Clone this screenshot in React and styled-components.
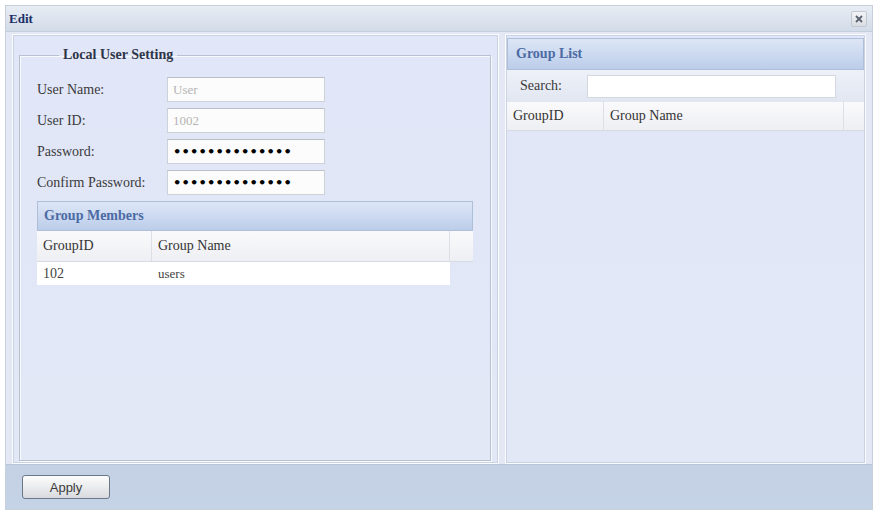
import React from "react"
import styled, { createGlobalStyle } from "styled-components"

const GlobalStyle = createGlobalStyle`
  body {
    margin: 0;
    background: #ffffff;
    font-family: "Liberation Serif", "Times New Roman", serif;
    color: #3a3a3a;
  }
`

const Window = styled.div`
  box-sizing: border-box;
  margin: 5px 0 0 5px;
  width: 868px;
  height: 505px;
  border: 1px solid #c6cfdb;
  background: #c4d2e6;
  display: flex;
  flex-direction: column;
`

const TitleBar = styled.div`
  height: 25px;
  display: flex;
  align-items: center;
  justify-content: space-between;
  padding: 0 5px 0 3px;
  background: linear-gradient(#e8edf4, #d2dbe8);
  border-bottom: 1px solid #c4cedc;
`

const Title = styled.span`
  font-weight: bold;
  font-size: 13px;
  color: #1b2f67;
`

const CloseButton = styled.div`
  width: 14px;
  height: 14px;
  display: flex;
  align-items: center;
  justify-content: center;
  background: linear-gradient(#f3f4f6, #d9dde3);
  border: 1px solid #c3c9d2;
  border-radius: 2px;
`

const Body = styled.div`
  height: 430px;
  display: flex;
  gap: 6px;
  padding: 2px 4px 0 6px;
  background: #e3e8f4;
  border-bottom: 1px solid #b9c6d8;
`

const Panel = styled.div`
  box-sizing: border-box;
  width: ${p => p.width}px;
  height: 100%;
  border: 1px solid #fafcff;
  box-shadow: inset 0 0 0 1px #cad3e1;
  background: linear-gradient(#e1e6f8, #e2e8f6);
  display: flex;
  flex-direction: column;
  padding: ${p => p.pad || "0"};
`

const Fieldset = styled.fieldset`
  flex: 1;
  margin: 0;
  padding: 14px 16px 0 17px;
  border: 1px solid #b8c1ce;
  box-shadow: 1px 1px 0 #f7f9fd, inset 1px 1px 0 #f7f9fd;
  min-width: 0;
`

const Legend = styled.legend`
  margin-left: 22px;
  padding: 0 4px;
  font-weight: bold;
  font-size: 14px;
  color: #2e3547;
`

const FormRow = styled.div`
  display: grid;
  grid-template-columns: 130px 158px;
  align-items: center;
  height: 25px;
  margin-bottom: 6px;
  font-size: 14px;
`

const TextBox = styled.div`
  box-sizing: border-box;
  height: 25px;
  display: flex;
  align-items: center;
  padding: 0 5px;
  background: #fcfcfc;
  border: 1px solid #cdd1d8;
  border-top-color: #b9bec7;
  font-size: 13px;
  color: ${p => (p.dots ? "#000" : "#b5b5b5")};
  letter-spacing: ${p => (p.dots ? "0.2px" : "0")};
  font-weight: ${p => (p.dots ? "bold" : "normal")};
  font-family: ${p => (p.dots ? '"DejaVu Sans", sans-serif' : "inherit")};
`

const Grid = styled.div`
  width: 436px;
`

const GridHeader = styled.div`
  box-sizing: border-box;
  height: ${p => p.h || 30}px;
  display: flex;
  align-items: center;
  padding-left: ${p => p.indent || 6}px;
  background: linear-gradient(#dde6f6, #bccdea);
  border: 1px solid #aebfda;
  font-weight: bold;
  font-size: 14px;
  color: #4c6aa3;
`

const ColumnHeader = styled.div`
  display: grid;
  grid-template-columns: ${p => p.cols};
  height: ${p => p.h || 30}px;
  background: linear-gradient(#fafafc, #eeeff3);
  border-bottom: 1px solid #d6dae2;
`

const HeadCell = styled.div`
  display: flex;
  align-items: center;
  padding-left: 6px;
  border-right: 1px solid #dcdfe6;
  font-size: 14px;
  color: #333;
  &:last-child {
    border-right: none;
  }
`

const DataRow = styled.div`
  display: grid;
  grid-template-columns: 115px 298px;
  width: 413px;
  height: 23px;
  background: #ffffff;
`

const DataCell = styled.div`
  display: flex;
  align-items: center;
  padding-left: 6px;
  font-size: ${p => p.size || 14}px;
  color: #444;
`

const SearchBar = styled.div`
  height: 32px;
  display: flex;
  align-items: center;
  gap: 25px;
  padding-left: 13px;
  background: linear-gradient(#eef1f8, #e1e6f1);
  font-size: 14px;
`

const SearchInput = styled.div`
  box-sizing: border-box;
  width: 249px;
  height: 23px;
  background: #ffffff;
  border: 1px solid #d3d8e1;
`

const Footer = styled.div`
  flex: 1;
  display: flex;
  align-items: center;
  padding-left: 16px;
  background: linear-gradient(#c4d1e5, #c5d3e7);
`

const ApplyButton = styled.button`
  width: 88px;
  height: 24px;
  border: 1px solid #6b788a;
  border-radius: 3px;
  background: linear-gradient(#fdfdfd, #d8dadd);
  font-family: "Liberation Sans", Arial, sans-serif;
  font-size: 13px;
  color: #3a3a3a;
  padding: 0;
`

const members = [{ id: "102", name: "users" }]

export default function App() {
  return (
    <>
      <GlobalStyle />
      <Window>
        <TitleBar>
          <Title>Edit</Title>
          <CloseButton>
            <svg width="8" height="8" viewBox="0 0 8 8">
              <path d="M1 1L7 7M7 1L1 7" stroke="#5a6270" strokeWidth="1.8" />
            </svg>
          </CloseButton>
        </TitleBar>
        <Body>
          <Panel width={487} pad="12px 7px 2px 6px">
            <Fieldset>
              <Legend>Local User Setting</Legend>
              <FormRow>
                <span>User Name:</span>
                <TextBox>User</TextBox>
              </FormRow>
              <FormRow>
                <span>User ID:</span>
                <TextBox>1002</TextBox>
              </FormRow>
              <FormRow>
                <span>Password:</span>
                <TextBox dots>••••••••••••••</TextBox>
              </FormRow>
              <FormRow>
                <span>Confirm Password:</span>
                <TextBox dots>••••••••••••••</TextBox>
              </FormRow>
              <Grid>
                <GridHeader>Group Members</GridHeader>
                <ColumnHeader cols="115px 298px 1fr">
                  <HeadCell>GroupID</HeadCell>
                  <HeadCell>Group Name</HeadCell>
                  <HeadCell />
                </ColumnHeader>
                {members.map(m => (
                  <DataRow key={m.id}>
                    <DataCell>{m.id}</DataCell>
                    <DataCell size={13}>{m.name}</DataCell>
                  </DataRow>
                ))}
              </Grid>
            </Fieldset>
          </Panel>
          <Panel width={361} pad="3px 1px 0 1px">
            <GridHeader h={32} indent={8}>Group List</GridHeader>
            <SearchBar>
              <span>Search:</span>
              <SearchInput />
            </SearchBar>
            <ColumnHeader cols="97px 240px 1fr" h={28}>
              <HeadCell>GroupID</HeadCell>
              <HeadCell>Group Name</HeadCell>
              <HeadCell />
            </ColumnHeader>
          </Panel>
        </Body>
        <Footer>
          <ApplyButton>Apply</ApplyButton>
        </Footer>
      </Window>
    </>
  )
}
